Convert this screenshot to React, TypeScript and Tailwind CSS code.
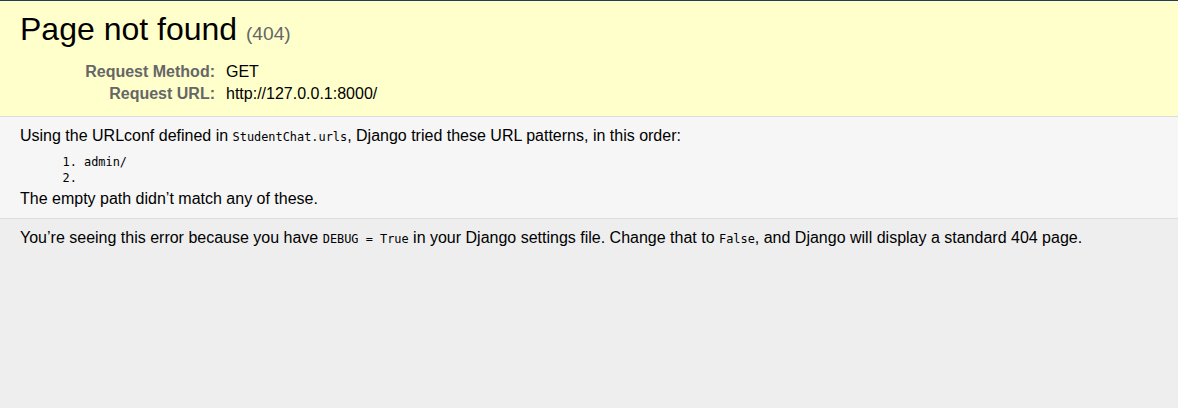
const mono = "font-['DejaVu_Sans_Mono',monospace] text-[11.9px]";
const code = `${mono} leading-none`;

const App = () => {
  return (
    <div className="min-h-[408px] bg-[#eee] text-black font-['Liberation_Sans',Arial,sans-serif] text-base leading-[18.4px] border-t border-[#243b5a]">
      <header className="bg-[#ffc] px-5 py-2.5 border-b border-[#ddd]">
        <h1 className="text-[32px] leading-[37px] font-normal mb-[12.8px]">
          Page not found <small className="text-[60%] leading-none text-[#666]">(404)</small>
        </h1>
        <table className="w-full border-collapse">
          <tbody>
            <tr>
              <th className="w-[192px] box-content text-right align-top text-[#666] font-bold py-0.5 pl-[3px] pr-2 whitespace-nowrap">
                Request Method:
              </th>
              <td className="align-top py-0.5 px-[3px]">GET</td>
            </tr>
            <tr>
              <th className="w-[192px] box-content text-right align-top text-[#666] font-bold py-0.5 pl-[3px] pr-2 whitespace-nowrap">
                Request URL:
              </th>
              <td className="align-top py-0.5 px-[3px]">http://127.0.0.1:8000/</td>
            </tr>
          </tbody>
        </table>
      </header>

      <main className="bg-[#f6f6f6] px-5 py-2.5 border-b border-[#ddd]">
        <p>
          Using the URLconf defined in <code className={code}>StudentChat.urls</code>, Django tried
          these URL patterns, in this order:
        </p>
        <ol className={`list-decimal mx-16 mt-[9px] mb-1 leading-[16px] ${mono}`}>
          <li>admin/</li>
          <li>&nbsp;</li>
        </ol>
        <p>The empty path didn’t match any of these.</p>
      </main>

      <footer className="bg-[#eee] px-5 py-2.5">
        <p>
          You’re seeing this error because you have <code className={code}>DEBUG = True</code> in
          your Django settings file. Change that to <code className={code}>False</code>, and Django
          will display a standard 404 page.
        </p>
      </footer>
    </div>
  );
};

export default App;
